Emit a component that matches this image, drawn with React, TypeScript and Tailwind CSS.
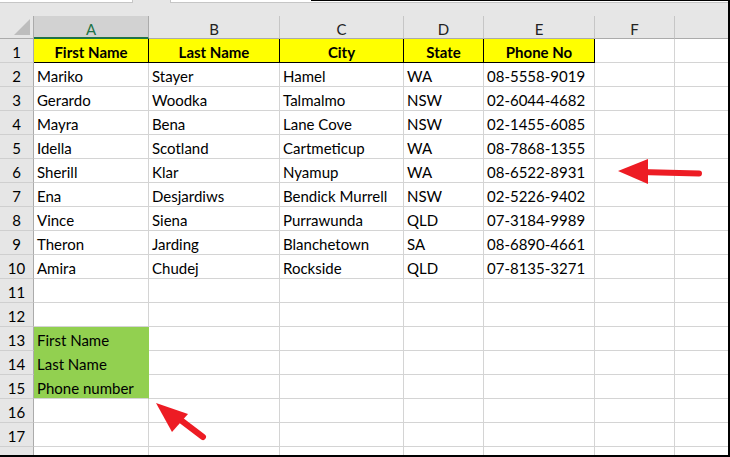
import React from "react";

const data: string[][] = [
  ["Mariko", "Stayer", "Hamel", "WA", "08-5558-9019"],
  ["Gerardo", "Woodka", "Talmalmo", "NSW", "02-6044-4682"],
  ["Mayra", "Bena", "Lane Cove", "NSW", "02-1455-6085"],
  ["Idella", "Scotland", "Cartmeticup", "WA", "08-7868-1355"],
  ["Sherill", "Klar", "Nyamup", "WA", "08-6522-8931"],
  ["Ena", "Desjardiws", "Bendick Murrell", "NSW", "02-5226-9402"],
  ["Vince", "Siena", "Purrawunda", "QLD", "07-3184-9989"],
  ["Theron", "Jarding", "Blanchetown", "SA", "08-6890-4661"],
  ["Amira", "Chudej", "Rockside", "QLD", "07-8135-3271"],
];

const widths = ["w-[115px]", "w-[131px]", "w-[124px]", "w-[80px]", "w-[111px]", "w-[80px]", "w-[118px]"];
const letters = ["A", "B", "C", "D", "E", "F", "G"];
const headers = ["First Name", "Last Name", "City", "State", "Phone No"];
const green: Record<number, string> = { 13: "First Name", 14: "Last Name", 15: "Phone number" };

function RowHeader({ n }: { n: number }) {
  return (
    <div className="w-[34px] shrink-0 h-full bg-[#e6e6e6] border-r border-b border-r-[#ababab] border-b-[#cfcfcf] text-center pt-[4px] leading-[18px] text-black">
      {n}
    </div>
  );
}

function Row({ n }: { n: number }) {
  const cells: React.ReactNode[] = [];
  for (let c = 0; c < 7; c++) {
    const w = widths[c];
    if (n === 1 && c < 5) {
      cells.push(
        <div key={c} className={`${w} shrink-0 h-full bg-[#ffff00] border-r border-b border-black text-center font-bold pt-[4px] leading-[18px] whitespace-nowrap`}>
          {headers[c]}
        </div>
      );
    } else if (n >= 2 && n <= 10 && c < 5) {
      cells.push(
        <div key={c} className={`${w} shrink-0 h-full bg-white border-r border-b border-[#d4d4d4] pl-[3px] pt-[4px] leading-[18px] whitespace-nowrap overflow-hidden`}>
          {data[n - 2][c]}
        </div>
      );
    } else if (green[n] && c === 0) {
      cells.push(
        <div
          key={c}
          className={`${w} shrink-0 h-full bg-[#92d050] border-r border-b border-r-[#92d050] ${n === 15 ? "border-b-[#d4d4d4]" : "border-b-[#92d050]"} pl-[3px] pt-[4px] leading-[18px] whitespace-nowrap`}
        >
          {green[n]}
        </div>
      );
    } else {
      cells.push(<div key={c} className={`${w} shrink-0 h-full bg-white border-r border-b border-[#d4d4d4]`} />);
    }
  }
  return (
    <div className="flex h-[24px] shrink-0">
      <RowHeader n={n} />
      {cells}
    </div>
  );
}

export default function App() {
  const rows = Array.from({ length: 18 }, (_, i) => i + 1);
  return (
    <div className="w-[730px] h-[457px] bg-white font-['Lato',sans-serif] text-[15px] text-black">
      <div className="relative w-[730px] h-[457px] border-r-2 border-b-2 border-black overflow-hidden">
        {/* formula bar remnants */}
        <div className="flex h-[3px] bg-[#e6e6e6]">
          <div className="w-[133px] h-full bg-white border-r border-b border-[#c6c6c6]" />
          <div className="w-[37px] h-full" />
          <div className="flex-1 h-full bg-white border-l border-b border-[#c6c6c6]">
            <div className="ml-[140px] h-[1px] bg-black" />
          </div>
        </div>
        <div className="h-[13px] bg-[#e6e6e6]" />
        {/* column headers */}
        <div className="flex h-[23px] bg-[#e6e6e6]">
          <div className="w-[34px] shrink-0 h-full border-r border-b border-[#ababab] flex items-end justify-end pr-[3px] pb-[3px]">
            <svg width="16" height="16" viewBox="0 0 16 16">
              <polygon points="16,0 16,16 0,16" fill="#bdbdbd" />
            </svg>
          </div>
          {letters.map((l, i) =>
            i === 0 ? (
              <div key={l} className={`${widths[i]} shrink-0 h-full bg-[#d2d2d2] border-r border-r-[#ababab] border-b-2 border-b-[#217346] text-center pt-[4px] leading-[18px] text-[#217346]`}>
                {l}
              </div>
            ) : (
              <div key={l} className={`${widths[i]} shrink-0 h-full border-r border-b border-r-[#c6c6c6] border-b-[#ababab] text-center pt-[4px] leading-[18px] text-[#222]`}>
                {l}
              </div>
            )
          )}
        </div>
        {rows.map((n) => (
          <Row key={n} n={n} />
        ))}
        {/* arrows */}
        <svg className="absolute left-0 top-0 pointer-events-none" width="730" height="457">
          <line x1="640" y1="172" x2="699" y2="173.5" stroke="#ed1c24" strokeWidth="6" strokeLinecap="round" />
          <polygon points="618,171 648,159 648,184" fill="#ed1c24" />
          <line x1="178" y1="418" x2="203" y2="437" stroke="#ed1c24" strokeWidth="6" strokeLinecap="round" />
          <polygon points="156,403 188,414 172,432" fill="#ed1c24" />
        </svg>
      </div>
    </div>
  );
}
